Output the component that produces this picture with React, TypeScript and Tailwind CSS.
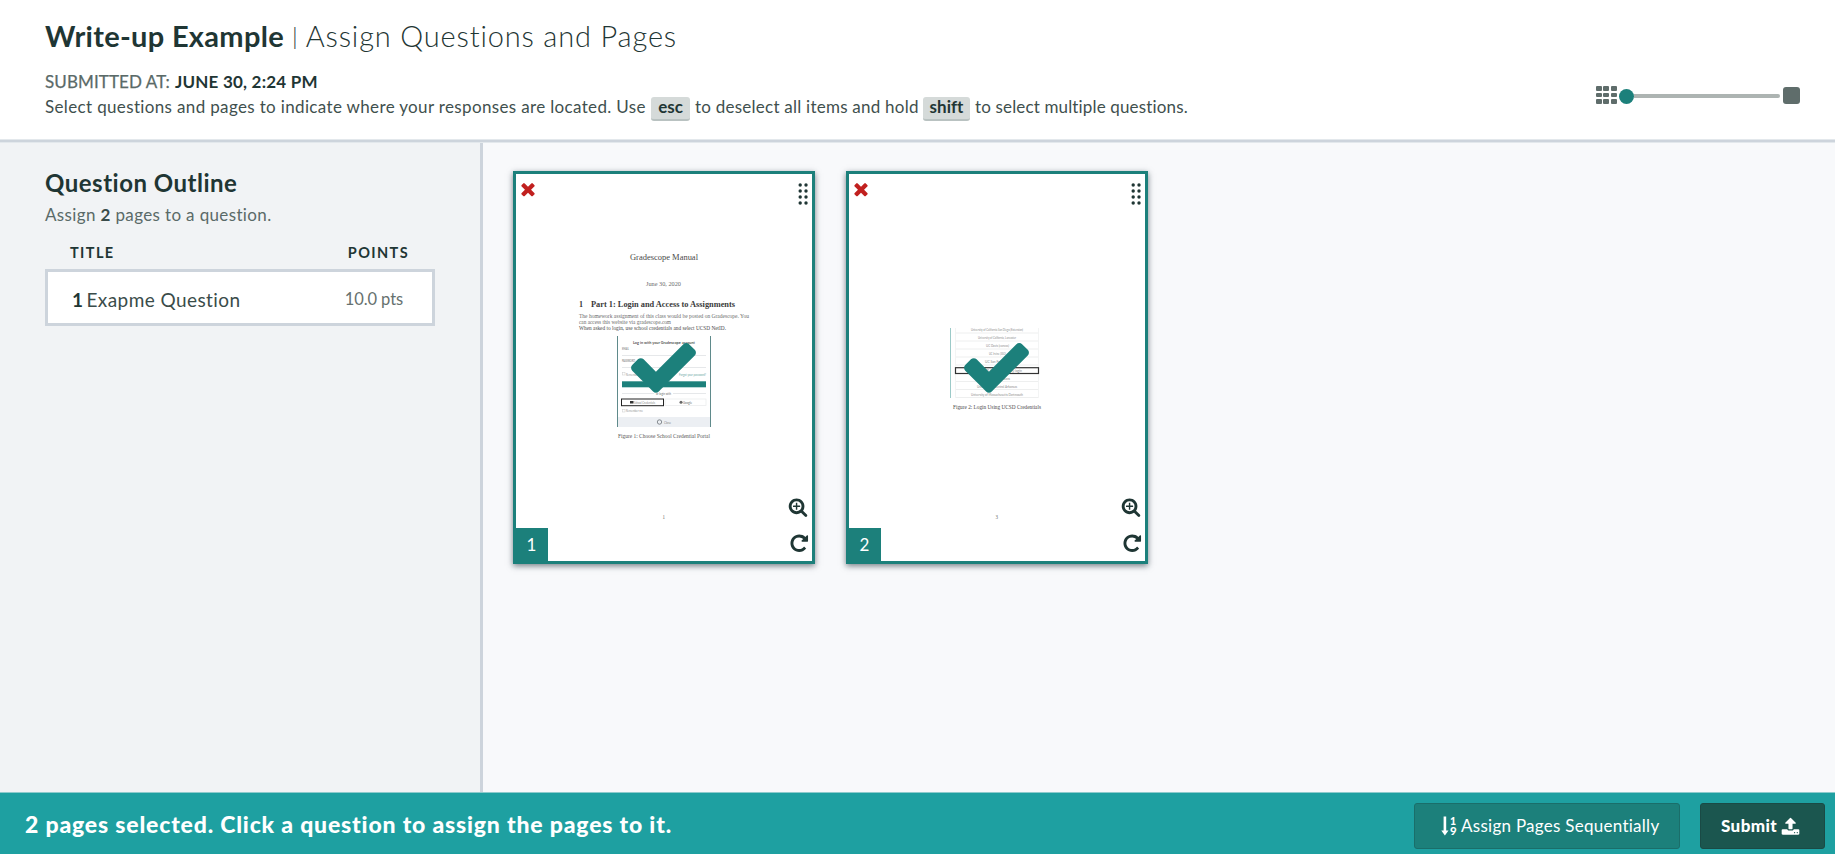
import React from "react";

type IconProps = { d: string; className: string };

function Glyph({ d, className }: IconProps) {
  return (
    <svg viewBox="0 0 1792 1792" fill="currentColor" className={className} aria-hidden="true">
      <path d={d} />
    </svg>
  );
}

const TIMES =
  "M1490 1322q0 40-28 68l-136 136q-28 28-68 28t-68-28l-294-294-294 294q-28 28-68 28t-68-28l-136-136q-28-28-28-68t28-68l294-294-294-294q-28-28-28-68t28-68l136-136q28-28 68-28t68 28l294 294 294-294q28-28 68-28t68 28l136 136q28 28 28 68t-28 68l-294 294 294 294q28 28 28 68z";
const CHECK =
  "M1671 566q0 40-28 68l-724 724-136 136q-28 28-68 28t-68-28l-136-136-362-362q-28-28-28-68t28-68l136-136q28-28 68-28t68 28l294 295 656-657q28-28 68-28t68 28l136 136q28 28 28 68z";
const REPEAT =
  "M1664 256v448q0 26-19 45t-45 19h-448q-42 0-59-40-17-39 14-69l138-138q-148-137-349-137-104 0-198.500 40.500t-163.500 109.500-109.500 163.500-40.500 198.500 40.500 198.500 109.500 163.500 163.500 109.500 198.500 40.500q119 0 225-52t179-147q7-10 23-12 15 0 25 9l137 138q9 8 9.500 20.500t-7.500 22.500q-109 132-264 204.500t-327 72.500q-156 0-298-61t-245-164-164-245-61-298 61-298 164-245 245-164 298-61q147 0 284.500 55.500t244.500 156.500l130-129q29-31 70-14 39 17 39 59z";
const ZOOM =
  "M1088 800v64q0 13-9.500 22.500t-22.500 9.500h-224v224q0 13-9.500 22.500t-22.500 9.500h-64q-13 0-22.500-9.500t-9.500-22.500v-224h-224q-13 0-22.500-9.500t-9.500-22.500v-64q0-13 9.500-22.500t22.500-9.500h224v-224q0-13 9.500-22.500t22.500-9.500h64q13 0 22.500 9.500t9.500 22.500v224h224q13 0 22.500 9.500t9.500 22.500zm128 32q0-185-131.500-316.500t-316.500-131.500-316.500 131.500-131.500 316.500 131.500 316.500 316.500 131.500 316.500-131.500 131.500-316.500zm512 832q0 53-37.500 90.500t-90.500 37.500q-54 0-90-38l-343-342q-179 124-399 124-143 0-273.500-55.500t-225-150-150-225-55.500-273.500 55.500-273.500 150-225 225-150 273.500-55.500 273.500 55.500 225 150 150 225 55.500 273.500q0 220-124 399l343 343q37 37 37 90z";
const UPLOAD =
  "M1344 1472q0-26-19-45t-45-19-45 19-19 45 19 45 45 19 45-19 19-45zm256 0q0-26-19-45t-45-19-45 19-19 45 19 45 45 19 45-19 19-45zm128-224v320q0 40-28 68t-68 28h-1472q-40 0-68-28t-28-68v-320q0-40 28-68t68-28h427q21 56 70.500 92t110.500 36h256q61 0 110.500-36t70.500-92h427q40 0 68 28t28 68zm-325-648q-17 40-59 40h-256v448q0 26-19 45t-45 19h-256q-26 0-45-19t-19-45v-448h-256q-42 0-59-40-17-39 14-69l448-448q18-19 45-19t45 19l448 448q31 30 14 69z";

function Key({ children, width }: { children: string; width: string }) {
  return (
    <kbd
      className={`mt-0.5 h-6 ${width} rounded-[3px] border-b-2 border-[#b9c2c1] bg-[#d5dad9] text-center font-['Lato',sans-serif] text-[17px] font-bold leading-[20px] text-[#1f3634]`}
    >
      {children}
    </kbd>
  );
}

function ZoomSlider() {
  return (
    <div className="flex h-[18px] items-center self-start">
      <div className="mr-px grid grid-cols-3 gap-x-[1.500px] gap-y-[1.500px]">
        {Array.from({ length: 9 }, (_, i) => (
          <span key={i} className="h-[4.700px] w-[5.800px] rounded-[1px] bg-[#5f6d6b]" />
        ))}
      </div>
      <span className="ml-[1.500px] mt-[3px] size-[15px] rounded-full bg-[#1c807b]" />
      <span className="mt-[2px] h-1 w-[146px] rounded-r-full bg-[#adb4b2]" />
      <span className="ml-[3px] size-[17px] rounded-[3px] bg-[#5f6d6b]" />
    </div>
  );
}

type LineProps = {
  x: number;
  y: number;
  w: number;
  s: number;
  bold?: boolean;
  sans?: boolean;
  fill?: string;
  children: string;
};

function Line({ x, y, w, s, bold, sans, fill = "#6b6b6b", children }: LineProps) {
  return (
    <text
      x={x}
      y={y}
      textLength={w}
      lengthAdjust="spacingAndGlyphs"
      fontSize={s}
      fontWeight={bold ? 700 : 400}
      fontFamily={sans ? "Lato, sans-serif" : "'Liberation Serif', serif"}
      fill={fill}
    >
      {children}
    </text>
  );
}

function ManualPage() {
  return (
    <svg viewBox="516 174 296 387" className="block size-full">
      <Line x={630} y={259.500} w={68} s={8.500} fill="#4a4a4a">Gradescope Manual</Line>
      <Line x={646} y={285.500} w={35} s={6}>June 30, 2020</Line>
      <Line x={579} y={306.500} w={4} s={7.500} bold fill="#3a3a3a">1</Line>
      <Line x={591} y={306.500} w={144} s={7.500} bold fill="#3a3a3a">Part 1: Login and Access to Assignments</Line>
      <Line x={579} y={317.500} w={170} s={5.500}>The homework assignment of this class would be posted on Gradescope. You</Line>
      <Line x={579} y={323.500} w={92} s={5.500}>can access this website via gradescope.com</Line>
      <Line x={579} y={329.500} w={147} s={5.500} fill="#4a4a4a">When asked to login, use school credentials and select UCSD NetID.</Line>
      <rect x={617} y={417} width={93} height={10} fill="#eceff3" />
      <path d="M617.500 336V427M710.500 336V427" stroke="#5f8a8b" />
      <Line x={633} y={343.500} w={62} s={4.200} bold sans fill="#555">Log in with your Gradescope account</Line>
      <Line x={622} y={349.500} w={7} s={3} sans>EMAIL</Line>
      <Line x={622} y={361.500} w={13} s={3} sans>PASSWORD</Line>
      <path d="M622 355.500H706M622 367.500H706M622 393.500H654M673 393.500H706" stroke="#e6e8ea" />
      <rect x={622.500} y={372.500} width={2.500} height={2.500} fill="none" stroke="#ccc" strokeWidth={0.500} />
      <Line x={626} y={375.500} w={17} s={3.500} sans fill="#999">Remember me</Line>
      <Line x={679} y={375.500} w={27} s={3.500} sans fill="#6fa9a7">Forgot your password?</Line>
      <rect x={622} y={381.300} width={84} height={6} fill="#1c807b" />
      <Line x={656} y={394.500} w={15} s={4} sans>or login with</Line>
      <rect x={621.500} y={399} width={42} height={6.700} fill="#fff" stroke="#222" strokeWidth={1} />
      <rect x={630} y={401} width={3.500} height={2.500} fill="#333" />
      <Line x={634} y={403.700} w={21} s={3.500} sans fill="#888">School Credentials</Line>
      <rect x={665} y={399} width={41} height={6.500} fill="none" stroke="#e8eaec" strokeWidth={0.700} />
      <circle cx={681} cy={402.300} r={1.500} fill="#666" />
      <Line x={683} y={403.700} w={9} s={3.500} sans>Google</Line>
      <rect x={622.500} y={409.500} width={2.500} height={2.500} fill="none" stroke="#ccc" strokeWidth={0.500} />
      <Line x={626} y={412} w={17} s={3.500} sans fill="#999">Remember me</Line>
      <circle cx={659.500} cy={422} r={2.200} fill="none" stroke="#6d7378" strokeWidth={0.800} />
      <Line x={664} y={423.500} w={7} s={3.500} sans fill="#888">Close</Line>
      <Line x={618} y={438} w={92} s={5.500} fill="#555">Figure 1: Choose School Credential Portal</Line>
      <Line x={662.500} y={519} w={2.500} s={5.500}>1</Line>
    </svg>
  );
}

const SCHOOLS: [number, number, number, string][] = [
  [331, 971, 52, "University of California San Diego (Extension)"],
  [339, 978, 38, "University of California, Lancaster"],
  [347, 986, 23, "UC Davis (canvas)"],
  [355, 989, 17, "UC Irvine (SSO)"],
  [363, 985, 25, "UC San Francisco"],
  [371.500, 980, 42, "UCSD Active Directory login"],
  [379.500, 984, 26, "UC Santa Barbara"],
  [387.500, 977, 40, "University of Central Arkansas"],
  [395.500, 971, 52, "University of Massachusetts Dartmouth"],
];

function CredentialsPage() {
  return (
    <svg viewBox="849 174 296 387" className="block size-full">
      <path d="M950.500 328V398" stroke="#9ccac8" />
      {SCHOOLS.map(([y, x, w, name]) => (
        <g key={name}>
          <path d={`M955 ${y + 2}H1039`} stroke="#eeefef" />
          <Line x={x} y={y} w={w} s={3.600} sans fill="#8c8c8c">{name}</Line>
        </g>
      ))}
      <path d="M955.500 328V398M1038.500 328V398" stroke="#f3f4f4" />
      <rect x={955.500} y={367.700} width={83} height={5.800} fill="none" stroke="#333" strokeWidth={1.200} />
      <Line x={953} y={408.500} w={88} s={5.500} fill="#4a4a4a">Figure 2: Login Using UCSD Credentials</Line>
      <Line x={995.500} y={519} w={2.500} s={5.500}>3</Line>
    </svg>
  );
}

function PageCard({ number, children }: { number: number; children: React.ReactNode }) {
  return (
    <div className="relative h-[393px] w-[302px] border-[3px] border-[#1c807b] bg-white shadow-[0_2px_6px_rgba(30,45,55,0.6)]">
      {children}
      <Glyph d={CHECK} className="absolute left-[110px] top-[155px] size-[75px] text-[#1c807b]" />
      <Glyph d={TIMES} className="absolute left-[2px] top-[5px] size-[20px] text-[#c1201f]" />
      <svg viewBox="0 0 10 22" className="absolute right-[4.500px] top-[9px] h-[22px] w-[10px]" fill="#1f3634">
        {[2, 8, 14, 20].map((y) => (
          <g key={y}>
            <circle cx={2.200} cy={y} r={1.700} />
            <circle cx={8} cy={y} r={1.700} />
          </g>
        ))}
      </svg>
      <Glyph d={ZOOM} className="absolute right-[4px] top-[322.500px] size-[20px] text-[#1f3634]" />
      <Glyph d={REPEAT} className="absolute right-[2.500px] top-[359px] size-[20.500px] text-[#1f3634]" />
      <div className="absolute bottom-0 left-0 h-[33px] w-8 bg-[#1c807b] pr-px text-center text-[17px] leading-[33px] text-white">
        {number}
      </div>
    </div>
  );
}

export default function App() {
  return (
    <div className="flex h-[854px] w-[1835px] flex-col overflow-hidden bg-white font-['Lato',sans-serif] text-[#1f3634] [font-variant-ligatures:none]">
      <header className="flex h-[139px] shrink-0 justify-between pl-[45px] pr-[35px]">
        <div className="pt-[18px]">
          <h1 className="flex whitespace-nowrap text-[29px] leading-9">
            <span className="font-bold tracking-[0.300px]">Write-up Example</span>
            <span className="ml-[8px] text-[24px] font-light">|</span>
            <span className="ml-[8px] font-light tracking-[0.830px]">Assign Questions and Pages</span>
          </h1>
          <p className="mt-4 flex gap-[5px] whitespace-nowrap text-[17px] leading-6">
            <span className="tracking-[0.100px] text-[#5a6a68] [-webkit-text-stroke:0.25px_#5a6a68]">SUBMITTED AT:</span>
            <span className="font-bold tracking-[0.220px]">JUNE 30, 2:24 PM</span>
          </p>
          <p className="mt-px flex gap-[5px] whitespace-nowrap text-[17px] leading-6 text-[#3f504e]">
            <span className="w-[601px] tracking-[0.350px]">
              Select questions and pages to indicate where your responses are located. Use
            </span>
            <Key width="w-[39px]">esc</Key>
            <span className="w-[223px] tracking-[0.240px]">to deselect all items and hold</span>
            <Key width="w-[47px]">shift</Key>
            <span className="tracking-[0.150px]">to select multiple questions.</span>
          </p>
        </div>
        <div className="pt-[86px]">
          <ZoomSlider />
        </div>
      </header>
      <div className="h-1 shrink-0 border-y border-[#e3e8ec] bg-[#cdd4dc]" />

      <div className="flex min-h-0 flex-1">
        <aside className="w-[483px] shrink-0 border-r-[3px] border-[#cdd4dc] bg-[#f1f3f5] px-[45px] pt-6">
          <h2 className="text-2xl font-bold tracking-[0.500px]">Question Outline</h2>
          <p className="mt-1 text-[17px] leading-6 tracking-[0.360px] text-[#5a6a68]">
            Assign <b className="text-[#3a4c4a]">2</b> pages to a question.
          </p>
          <div className="mt-4 flex justify-between pl-[25px] pr-[26px] text-[14.500px] font-bold leading-5 tracking-[1.400px]">
            <span>TITLE</span>
            <span>POINTS</span>
          </div>
          <div className="mt-[6px] flex h-[57px] w-[390px] justify-between border-[3px] border-[#cdd4dc] bg-white pl-[24px] pr-[29px]">
            <span className="flex gap-[3px] pt-[2px] text-[19px] leading-[51px] tracking-[0.420px] text-[#3a4c4a]">
              <b className="text-[#1f3634]">1</b>
              <span>Exapme Question</span>
            </span>
            <span className="pt-[2px] text-[16.500px] leading-[51px] tracking-[-0.100px] text-[#66716f]">10.0 pts</span>
          </div>
        </aside>
        <main className="flex flex-1 items-start gap-[31px] bg-[#f8f9fb] pl-[30px] pt-7">
          <PageCard number={1}>
            <ManualPage />
          </PageCard>
          <PageCard number={2}>
            <CredentialsPage />
          </PageCard>
        </main>
      </div>

      <footer className="flex h-[62px] shrink-0 items-center border-t border-[#8ecbcd] bg-[#1ea0a1] pl-[25px] pr-[10px] text-white">
        <p className="flex-1 whitespace-nowrap pt-0.5 text-[23px] font-black tracking-[0.820px]">
          2 pages selected. Click a question to assign the pages to it.
        </p>
        <button className="mt-[5px] flex h-[46px] w-[266px] items-center rounded-[3px] border border-[#1a6e6a] bg-[#1c807b] pl-[26px] text-[17px] tracking-[0.270px]">
          <svg viewBox="0 0 16 20" className="mr-1 h-5 w-4" fill="currentColor">
            <path d="M2.600 0.500h2.600v14H7.500L3.900 19.500 0.300 14.500H2.600z" />
            <text x="9" y="8.500" fontSize="10.500" fontWeight="900" fontFamily="Lato, sans-serif">1</text>
            <text x="9" y="18.800" fontSize="11.500" fontWeight="900" fontFamily="Lato, sans-serif">9</text>
          </svg>
          Assign Pages Sequentially
        </button>
        <button className="ml-5 mt-[5px] flex h-[46px] w-[125px] items-center rounded-[3px] border border-[#1a4a45] bg-[#1b564f] pl-[20px] text-[17px] font-black tracking-[0.400px]">
          Submit
          <Glyph d={UPLOAD} className="ml-[4px] size-[19px]" />
        </button>
      </footer>
    </div>
  );
}
